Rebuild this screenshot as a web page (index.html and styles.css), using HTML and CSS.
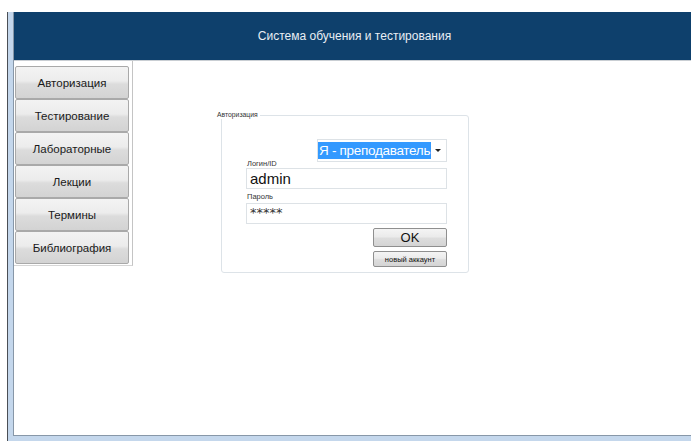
FILE: index.html
```html
<!DOCTYPE html>
<html lang="ru">
<head>
<meta charset="utf-8">
<title>Система обучения и тестирования</title>
<link rel="stylesheet" href="styles.css">
</head>
<body>
<div class="window">
  <div class="frame">
    <header class="titlebar">Система обучения и тестирования</header>
    <div class="workspace">
      <nav class="menu">
        <button class="menu-btn">Авторизация</button>
        <button class="menu-btn">Тестирование</button>
        <button class="menu-btn">Лабораторные</button>
        <button class="menu-btn">Лекции</button>
        <button class="menu-btn">Термины</button>
        <button class="menu-btn">Библиография</button>
      </nav>
      <main class="content">
        <section class="group">
          <span class="group-title">Авторизация</span>
          <div class="role-row">
            <div class="role-select">
              <span class="role-value">Я - преподаватель</span>
              <span class="role-arrow"></span>
            </div>
          </div>
          <label class="field-label label-login">Логин/ID</label>
          <div class="field login">admin</div>
          <label class="field-label label-pass">Пароль</label>
          <div class="field password">*****</div>
          <div class="actions">
            <button class="btn btn-ok">OK</button>
            <button class="btn btn-small">новый аккаунт</button>
          </div>
        </section>
      </main>
    </div>
  </div>
</div>
</body>
</html>
```

FILE: styles.css
```css
* { box-sizing: border-box; }

html, body {
  margin: 0;
  padding: 0;
  background: #ffffff;
  width: 691px;
  height: 441px;
  overflow: hidden;
  font-family: "Liberation Sans", Arial, sans-serif;
}

/* outer window chrome: dark outline + pale blue frame */
.window {
  margin: 12px 0 0 7px;
  height: 429px;
  border-left: 1px solid #4b4f55;
  background: #c4d7ec;
  padding: 0 0 5px 5px;
}

.frame {
  height: 100%;
  background: #ffffff;
  border-left: 1px solid #8797a8;
  border-bottom: 1px solid #8797a8;
  display: flex;
  flex-direction: column;
}

.titlebar {
  height: 49px;
  background: #0e406c;
  color: #e8eef4;
  font-size: 12px;
  display: flex;
  align-items: center;
  justify-content: center;
  padding-left: 4px;
  border-bottom: 1px solid #c9ced3;
}

.workspace {
  flex: 1;
  display: flex;
  align-items: flex-start;
}

/* left navigation column */
.menu {
  width: 119px;
  padding: 5px 3px 1px 1px;
  border-right: 1px solid #c4c4c4;
  border-bottom: 1px solid #d6d6d6;
  display: flex;
  flex-direction: column;
}

.menu-btn {
  height: 33px;
  margin: 0;
  border: 1px solid #a9a9a9;
  border-radius: 2px;
  background: linear-gradient(#f3f3f3 0%, #ececec 45%, #dcdcdc 55%, #d3d3d3 100%);
  font-family: "Liberation Sans", Arial, sans-serif;
  font-size: 11.5px;
  color: #1a1a1a;
  padding: 0;
}

.content {
  flex: 1;
  padding: 54px 0 0 88px;
}

/* authorization group box */
.group {
  position: relative;
  width: 248px;
  height: 158px;
  padding: 23px 21px 0 24px;
  border: 1px solid #dde3e8;
  border-radius: 3px;
  display: flex;
  flex-direction: column;
}

/* caption sits on top of the group border */
.group-title {
  position: absolute;
  top: -5px;
  left: -5px;
  background: #ffffff;
  padding: 0 2px 0 0;
  font-size: 6.8px;
  line-height: 8px;
  color: #333;
}

.role-row {
  display: flex;
  justify-content: flex-end;
}

.role-select {
  width: 130px;
  height: 23px;
  border: 1px solid #dde2e6;
  display: flex;
  align-items: center;
  padding: 0 5px 0 0;
}

.role-value {
  background: #3399ff;
  color: #ffffff;
  font-size: 13.5px;
  letter-spacing: -0.3px;
  line-height: 17px;
  padding: 0 1px 0 1px;
  white-space: nowrap;
}

.role-arrow {
  margin-left: auto;
  width: 0;
  height: 0;
  border-left: 3px solid transparent;
  border-right: 3px solid transparent;
  border-top: 3px solid #222;
}

.field-label {
  font-size: 7.5px;
  color: #333;
  line-height: 9px;
  height: 9px;
  padding-left: 1px;
}

.label-login { margin-top: -3px; }
.label-pass { margin-top: 3px; }

.field {
  height: 21px;
  border: 1px solid #dde2e6;
  padding-left: 3px;
  display: flex;
  align-items: center;
  color: #111;
}

.login {
  font-size: 15px;
}

.label-pass + .field { margin-top: 2px; }

.password {
  font-family: "DejaVu Sans", sans-serif;
  font-size: 13px;
  letter-spacing: 0;
  color: #333;
  align-items: flex-start;
  padding-top: 1px;
}

.actions {
  display: flex;
  flex-direction: column;
  align-items: flex-end;
  gap: 4px;
  margin-top: 4px;
}

.btn {
  width: 74px;
  margin: 0;
  padding: 0;
  border: 1px solid #8f8f8f;
  border-radius: 2px;
  background: linear-gradient(#f4f4f4 0%, #ebebeb 45%, #dddddd 55%, #d4d4d4 100%);
  font-family: "Liberation Sans", Arial, sans-serif;
  color: #111;
}

.btn-ok {
  height: 19px;
  font-size: 13px;
}

.btn-small {
  height: 16px;
  font-size: 7.5px;
}
```
